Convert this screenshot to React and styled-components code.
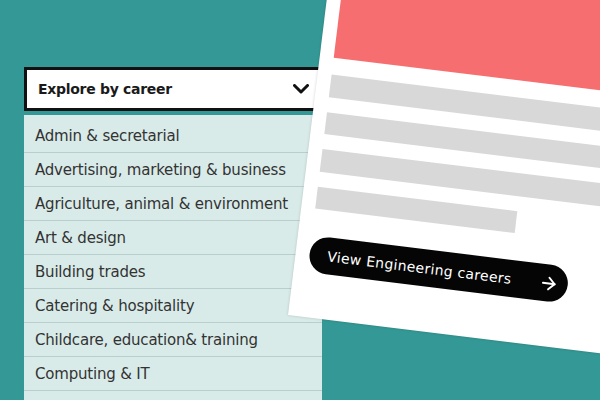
import React from 'react';
import styled, { createGlobalStyle } from 'styled-components';
import { ArrowRight } from 'lucide-react';

const GlobalStyle = createGlobalStyle`
  html, body {
    margin: 0;
    padding: 0;
  }
  body {
    background-color: #349996;
    font-family: "DejaVu Sans", "Liberation Sans", sans-serif;
  }
`;

const Page = styled.div`
  position: relative;
  width: 600px;
  height: 400px;
  overflow: hidden;
  background-color: #349996;
  padding: 67px 0 0 24px;
  box-sizing: border-box;
`;

const Panel = styled.div`
  width: 298px;
  display: flex;
  flex-direction: column;
  gap: 4px;
`;

const Dropdown = styled.div`
  height: 44px;
  box-sizing: border-box;
  border: 3px solid #111;
  background-color: #fff;
  display: flex;
  align-items: center;
  justify-content: space-between;
  padding: 0 10px 0 11px;
  font-size: 14px;
  font-weight: 700;
  letter-spacing: -0.3px;
  color: #1a1a1a;
`;

const List = styled.ul`
  list-style: none;
  margin: 0;
  padding: 4px 0 40px;
  background-color: #d9ebe9;
`;

const Item = styled.li`
  height: 34px;
  box-sizing: border-box;
  border-bottom: 1px solid #b8cfcd;
  display: flex;
  align-items: center;
  padding-left: 11px;
  font-size: 15px;
  letter-spacing: -0.2px;
  color: #333;
  white-space: nowrap;
`;

const Card = styled.div`
  position: absolute;
  left: 288px;
  top: ${315 - 406}px;
  width: 340px;
  height: 406px;
  box-sizing: border-box;
  background-color: #fff;
  transform-origin: 0 100%;
  transform: rotate(7deg);
  box-shadow: 0 0 3px rgba(0, 0, 0, 0.18);
  padding: 15px 14px 44px 14px;
  display: flex;
  flex-direction: column;
`;

const Hero = styled.div`
  height: 130px;
  background-color: #f66e70;
  margin-bottom: 17px;
`;

const Bars = styled.div`
  display: flex;
  flex-direction: column;
  gap: 15px;
  margin-bottom: 27px;
`;

const Bar = styled.div`
  height: 22.5px;
  width: ${(p) => p.$width || '100%'};
  background-color: #d7d8d7;
`;

const CareerButton = styled.button`
  width: 260px;
  height: 37px;
  border: none;
  border-radius: 19px;
  background-color: #050505;
  color: #fff;
  display: flex;
  align-items: center;
  justify-content: space-between;
  padding: 0 9px 0 18px;
  font-family: "DejaVu Sans", "Liberation Sans", sans-serif;
  font-size: 14px;
  letter-spacing: 0.3px;
  cursor: pointer;
`;

const careers = [
  'Admin & secretarial',
  'Advertising, marketing & business',
  'Agriculture, animal & environment',
  'Art & design',
  'Building trades',
  'Catering & hospitality',
  'Childcare, education& training',
  'Computing & IT',
];

const Chevron = () => (
  <svg width="16" height="10" viewBox="0 0 16 10" fill="none">
    <polyline points="1.5,1.5 8,8 14.5,1.5" stroke="#111" strokeWidth="3" strokeLinecap="round" strokeLinejoin="round" />
  </svg>
);

const App = () => {
  return (
    <>
      <GlobalStyle />
      <Page>
        <Panel>
          <Dropdown>
            <span>Explore by career</span>
            <Chevron />
          </Dropdown>
          <List>
            {careers.map((c) => (
              <Item key={c}>{c}</Item>
            ))}
          </List>
        </Panel>
        <Card>
          <Hero />
          <Bars>
            <Bar />
            <Bar />
            <Bar />
            <Bar $width="201px" />
          </Bars>
          <CareerButton>
            <span>View Engineering careers</span>
            <ArrowRight size={20} strokeWidth={2.4} />
          </CareerButton>
        </Card>
      </Page>
    </>
  );
};

export default App;
